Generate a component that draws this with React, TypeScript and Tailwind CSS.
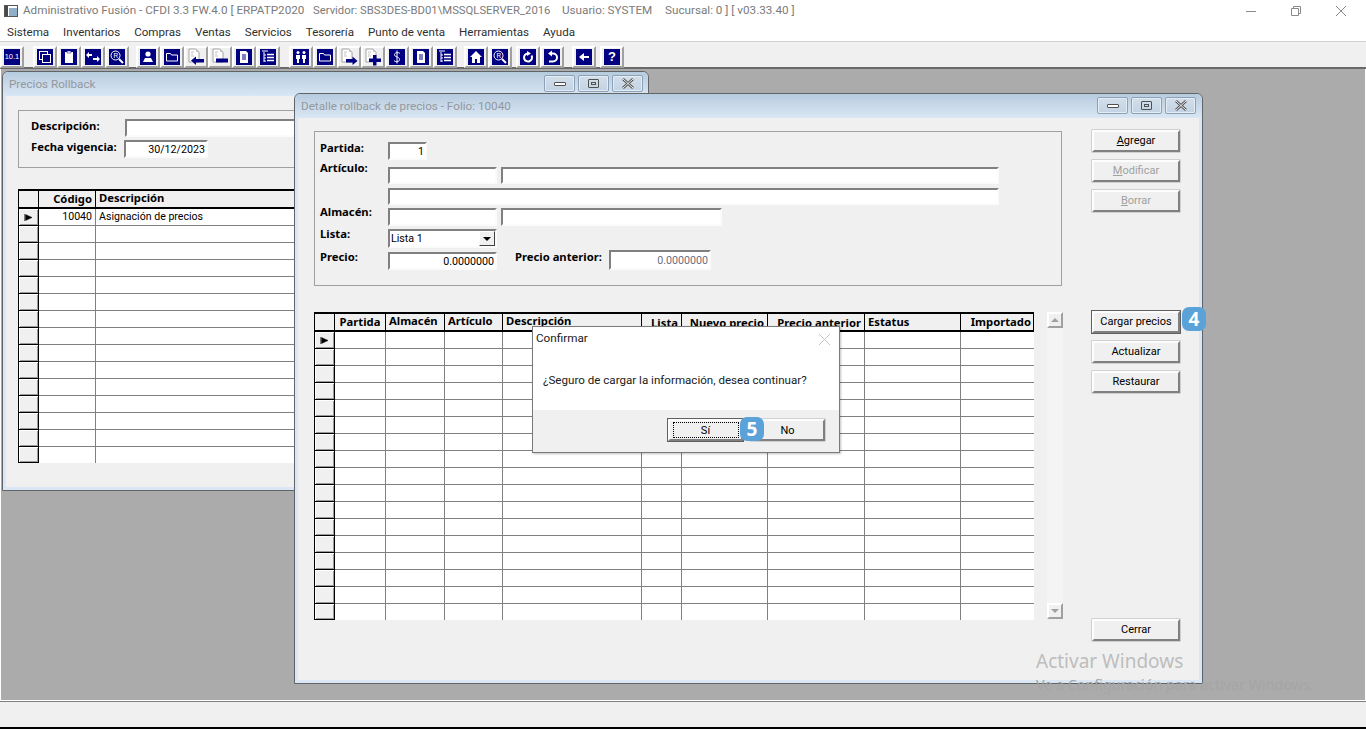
import React from "react";

const ui = "font-['Roboto',sans-serif]";
const boldFace = "font-['Noto_Sans',sans-serif] font-bold";

const Page = ({ children }: { children: React.ReactNode }) => (
  <svg width="18" height="18" viewBox="0 0 18 18">
    <path d="M2 1h7l3 3v10H2z" fill="#fff" stroke="#8f8f8f" strokeWidth="0.8" />
    <path d="M9 1v3h3z" fill="#c8c8c8" />
    <path d="M4 4h3M4 6h2M4 8h3" stroke="#b5b5b5" strokeWidth="0.8" />
    {children}
  </svg>
);

const Navy = ({ children }: { children: React.ReactNode }) => (
  <svg width="16" height="16" viewBox="0 0 16 16" className="bg-[#000080]">
    {children}
  </svg>
);

const Search = () => (
  <Navy>
    <circle cx="6.5" cy="6.5" r="4.5" fill="none" stroke="#fff" strokeWidth="1" />
    <text x="4.6" y="9" fontSize="6.5" fill="#fff" fontFamily="Liberation Sans">R</text>
    <path d="M10 10l4 4" stroke="#fff" strokeWidth="2" />
  </Navy>
);
const Doc = () => (
  <Navy>
    <path d="M4 2h6l2 2v10H4z" fill="#fff" />
    <path d="M6 6h4M6 8h4M6 10h4" stroke="#000080" strokeWidth="1" />
  </Navy>
);
const Tree = () => (
  <Navy>
    <path d="M2 2h6M4 3v10M4 6h2M4 9h2M4 12h2" stroke="#fff" strokeWidth="1" fill="none" />
    <path d="M7 5.5h7M7 8.5h7M7 11.5h7" stroke="#fff" strokeWidth="1.6" />
  </Navy>
);
const Folder = () => (
  <Navy>
    <path d="M2.5 5V4.5h4l1 1.5h6v6h-11z" fill="none" stroke="#fff" strokeWidth="1" />
  </Navy>
);

const icons: React.ReactNode[] = [
  <span className="flex h-4 w-4 items-center justify-center bg-[#000080] font-['Liberation_Sans',sans-serif] text-[7.5px] leading-none text-white">10.1</span>,
  <Navy><rect x="2.5" y="2.5" width="8" height="8" fill="none" stroke="#fff" /><rect x="5.5" y="5.5" width="8" height="8" fill="#000080" stroke="#fff" /></Navy>,
  <Navy><path d="M4 3h8v11H4z" fill="#fff" /><path d="M6 2h4v2H6z" fill="#fff" stroke="#000080" strokeWidth="0.5" /></Navy>,
  <Navy><path d="M1 6l3-3v2h3v2H4v2zM15 10l-3-3v2H8v2h4v2z" fill="#fff" /></Navy>,
  <Search />,
  <Navy><circle cx="8" cy="5" r="2.6" fill="#fff" /><path d="M3 13l2-4h6l2 4z" fill="#fff" /></Navy>,
  <Folder />,
  <Page><path d="M4 12.5l5-4v2.5h8v3.5H9v2.5z" fill="#000080" /></Page>,
  <Page><path d="M5 10.5h12v4H5z" fill="#000080" /></Page>,
  <Doc />,
  <Tree />,
  <Navy><circle cx="5" cy="3.5" r="1.5" fill="#fff" /><circle cx="11" cy="3.5" r="1.5" fill="#fff" /><path d="M3 6h4v4H6v4H4v-4H3zM9 6h4v4h-1v4h-2v-4H9z" fill="#fff" /></Navy>,
  <Folder />,
  <Page><path d="M17.5 13l-5-4.5V11H6v3.5h6.500V17z" fill="#000080" /></Page>,
  <Page><path d="M9 7h3.500v3.500H17V14h-4.500v3.500H9V14H5v-3.500h4z" fill="#000080" /></Page>,
  <Navy><path d="M11 4.500C10 3.500 6 3 5.500 5.500S10.500 7.500 10.500 10.500 6 13 5 11.500M8 1.500v13" fill="none" stroke="#fff" strokeWidth="1" /></Navy>,
  <Doc />,
  <Tree />,
  <Navy><path d="M8 2l6 6h-2v6H9v-4H7v4H4V8H2z" fill="#fff" /></Navy>,
  <Search />,
  <Navy><path d="M8 4.500a4 4 0 1 0 3.500 2" fill="none" stroke="#fff" strokeWidth="2" /><path d="M7 2l4 2.500L7 7z" fill="#fff" /></Navy>,
  <Navy><path d="M7 4.500h2a3.500 3.500 0 0 1 0 8H5" fill="none" stroke="#fff" strokeWidth="2" /><path d="M8 1.500L4 4.500l4 3z" fill="#fff" /></Navy>,
  <Navy><path d="M3 8l5-4v3h5v2H8v3z" fill="#fff" /></Navy>,
  <span className="flex h-4 w-4 items-center justify-center bg-[#000080] font-['Liberation_Sans',sans-serif] text-[13px] font-bold text-white">?</span>,
];

// how many buttons per group, and the space before that group
const groups = [
  { n: 1, gap: "ml-0" },
  { n: 4, gap: "ml-[9px]" },
  { n: 6, gap: "ml-[7px]" },
  { n: 7, gap: "ml-[9px]" },
  { n: 2, gap: "ml-[7px]" },
  { n: 2, gap: "ml-[4px]" },
  { n: 1, gap: "ml-[8px]" },
  { n: 1, gap: "ml-[4px]" },
];

const Toolbar = () => {
  let at = 0;
  return (
    <div className="flex h-[26px] items-center border-b-2 border-[#696969] bg-[#f0f0f0] pt-[3px]">
      {groups.map((g, i) => {
        const slice = icons.slice(at, at + g.n);
        at += g.n;
        return (
          <div key={i} className={`flex ${g.gap}`}>
            {slice.map((icon, j) => (
              <div
                key={j}
                className="flex h-[22px] w-6 items-center justify-center border-2 border-t-white border-l-white border-r-[#a0a0a0] border-b-[#a0a0a0]"
              >
                {icon}
              </div>
            ))}
          </div>
        );
      })}
    </div>
  );
};

const menus = ["Sistema", "Inventarios", "Compras", "Ventas", "Servicios", "Tesorería", "Punto de venta", "Herramientas", "Ayuda"];

const Field = ({ className, value, muted }: { className: string; value?: string; muted?: boolean }) => (
  <div
    className={`flex items-center justify-end border-2 border-t-[#808080] border-l-[#808080] border-r-[#fbfbfb] border-b-[#fbfbfb] bg-white pr-[1px] pt-[2px] text-[10.7px] leading-none ${muted ? "text-[#6d6d80]" : "text-black"} ${className}`}
  >
    {value}
  </div>
);

const Btn = ({
  children,
  className = "",
  disabled,
  focused,
}: {
  children: React.ReactNode;
  className?: string;
  disabled?: boolean;
  focused?: boolean;
}) => (
  <div
    className={`flex h-[22px] items-center justify-center border-2 border-t-[#fdfdfd] border-l-[#fdfdfd] border-r-[#808080] border-b-[#808080] bg-[#f0f0f0] pb-[1px] text-[11px] leading-none shadow-[0_0_0_0.5px_#b0b0b0] ${disabled ? "text-[#a0a0a0]" : "text-black"} ${focused ? "outline outline-1 outline-[#606060]" : ""} ${className}`}
  >
    {children}
  </div>
);

const RowMark = () => (
  <svg width="9" height="7" viewBox="0 0 9 7">
    <path d="M.5 0v7M1.500 .5l6.500 3-6.500 3z" fill="#000" stroke="#000" strokeWidth="0.5" />
  </svg>
);

type Col = { label: string; cls: string };

const DataGrid = ({
  template,
  columns,
  rows,
  first,
}: {
  template: string;
  columns: Col[];
  rows: number;
  first?: string[];
}) => (
  <div className="flex flex-col">
    <div className={`grid h-[20px] border-t-2 border-black bg-[#f0f0f0] ${template}`}>
      <div className="border-x border-b-2 border-black" />
      {columns.map((c) => (
        <div key={c.label} className={`flex items-center whitespace-nowrap border-r border-b-2 border-black text-[11.25px] leading-none text-black ${boldFace} ${c.cls}`}>
          {c.label}
        </div>
      ))}
    </div>
    {Array.from({ length: rows }).map((_, r) => {
      const last = r === rows - 1;
      return (
        <div key={r} className={`grid bg-white ${last ? "h-[16px]" : "h-[17px]"} ${template}`}>
          <div className="flex items-center justify-center border-x border-b border-x-black border-b-black bg-[#f0f0f0] shadow-[inset_1px_1px_0_#fff,inset_-1px_-1px_0_#9a9a9a]">
            {r === 0 && <RowMark />}
          </div>
          {columns.map((c, i) => (
            <div
              key={c.label}
              className={`flex items-center border-[#808080] px-[3px] text-[10.6px] leading-none text-black ${last ? "" : "border-b"} ${i === columns.length - 1 ? "" : "border-r"} ${i === 0 ? "justify-end" : ""}`}
            >
              {r === 0 && first ? first[i] : ""}
            </div>
          ))}
        </div>
      );
    })}
  </div>
);

const WinButtons = ({ className }: { className: string }) => (
  <div className={`flex gap-[3px] ${className}`}>
    {["min", "max", "close"].map((k) => (
      <div
        key={k}
        className="flex h-[17px] w-[31px] items-center justify-center rounded-[2px] border border-[#8ba1b8] bg-gradient-to-b from-[#d3deea] to-[#c3d3e3] shadow-[inset_0_0_0_1px_#e4ecf4]"
      >
        {k === "min" && <div className="h-[4px] w-[12px] rounded-[1px] border border-[#505050] bg-white" />}
        {k === "max" && <div className="flex h-[9px] w-[11px] items-center justify-center rounded-[1px] border border-[#505050]"><div className="h-[3px] w-[5px] border border-[#505050]" /></div>}
        {k === "close" && (
          <svg width="14" height="11" viewBox="0 0 14 11">
            <path d="M2 1l10 9M12 1L2 10" stroke="#505050" strokeWidth="2.6" />
            <path d="M2 1l10 9M12 1L2 10" stroke="#f4f4f4" strokeWidth="1" />
          </svg>
        )}
      </div>
    ))}
  </div>
);

const MdiWindow = ({
  title,
  className,
  buttons,
  children,
}: {
  title: string;
  className: string;
  buttons: string;
  children: React.ReactNode;
}) => (
  <div className={`absolute flex flex-col rounded-t-[6px] border border-[#5f6468] bg-[#dbe7f4] ${className}`}>
    <div className="relative flex h-[24px] shrink-0 items-center rounded-t-[6px] bg-gradient-to-b from-[#b7cbdf] to-[#dae7f4] pl-[6px] pt-[2px] text-[11.7px] text-[#93989d]">
      {title}
      <WinButtons className={buttons} />
    </div>
    <div className="mx-[3px] mb-[3px] flex-1 overflow-hidden bg-[#f0f0f0]">{children}</div>
  </div>
);

const Label = ({ children, className = "" }: { children: React.ReactNode; className?: string }) => (
  <div className={`text-[11.25px] leading-[14px] text-black ${boldFace} ${className}`}>{children}</div>
);

const FormRow = ({ className, children }: { className: string; children: React.ReactNode }) => (
  <div className={`flex ${className}`}>{children}</div>
);

const Badge = ({ n, className }: { n: string; className: string }) => (
  <div className={`absolute z-30 flex h-[24px] w-[24px] items-center justify-center rounded-[7px] bg-[#5aa2d8] font-['Noto_Sans',sans-serif] text-[19px] font-bold leading-none text-white ${className}`}>
    {n}
  </div>
);

export default function App() {
  return (
    <div className={`relative flex h-[729px] w-[1366px] flex-col overflow-hidden bg-white ${ui}`}>
      {/* Title bar */}
      <div className="flex h-[22px] shrink-0 items-center text-[11.7px] text-[#7b7b7b]">
        <svg width="14" height="14" viewBox="0 0 14 14" className="ml-[4px] mr-[5px]">
          <rect x="0.5" y="1.5" width="13" height="11" fill="#fff" stroke="#555" />
          <rect x="1" y="2" width="3" height="10" fill="#4a4a4a" />
          <rect x="5" y="4" width="8" height="8" fill="#8fb0c9" />
        </svg>
        <span className="w-[290px] whitespace-nowrap">Administrativo Fusión - CFDI 3.3 FW.4.0 [ ERPATP2020</span>
        <span className="w-[249px] whitespace-nowrap text-[11.3px]">Servidor: SBS3DES-BD01\MSSQLSERVER_2016</span>
        <span className="w-[103px] whitespace-nowrap">Usuario: SYSTEM</span>
        <span className="whitespace-nowrap">Sucursal: 0 ] [ v03.33.40 ]</span>
        <div className="ml-auto flex items-center gap-[35px] pr-[20px]">
          <svg width="10" height="10" viewBox="0 0 10 10"><path d="M0 5.500h10" stroke="#8a8a8a" /></svg>
          <svg width="10" height="10" viewBox="0 0 10 10"><path d="M.5 2.500h7v7h-7zM2.500 2.500v-2h7v7h-2" fill="none" stroke="#8a8a8a" /></svg>
          <svg width="10" height="10" viewBox="0 0 10 10"><path d="M0 0l10 10M10 0L0 10" stroke="#8a8a8a" /></svg>
        </div>
      </div>

      {/* Menu */}
      <div className="flex h-[20px] shrink-0 items-center gap-[14px] border-b border-[#d0d0d0] pl-[7px] pt-[2px] text-[11.6px] text-[#303030]">
        {menus.map((m) => (
          <span key={m}>{m}</span>
        ))}
      </div>
      <div className="h-[1px] shrink-0 bg-[#f0f0f0]" />

      <Toolbar />

      {/* MDI area */}
      <div className="relative mx-[1px] flex-1 bg-[#ababab]">
        <MdiWindow title="Precios Rollback" className="left-[1px] top-[2px] z-0 h-[420px] w-[647px]" buttons="absolute right-[5px] top-[3px]">
          <div className="pl-[12px] pt-[14px]">
            <div className="h-[58px] w-[620px] border border-[#a0a0a0] pl-[12px] pt-[8px]">
              <FormRow className="h-[21px]">
                <Label className="w-[94px]">Descripción:</Label>
                <Field className="h-[18px] w-[400px]" />
              </FormRow>
              <FormRow>
                <Label className="w-[93px]">Fecha vigencia:</Label>
                <Field value="30/12/2023" className="h-[18px] w-[84px]" />
              </FormRow>
            </div>
            <div className="mt-[21px] w-[600px]">
              <DataGrid
                template="grid-cols-[21px_57px_1fr]"
                columns={[
                  { label: "Código", cls: "justify-end pr-[3px]" },
                  { label: "Descripción", cls: "pl-[3px] pb-[3px]" },
                ]}
                rows={15}
                first={["10040", "Asignación de precios"]}
              />
            </div>
          </div>
        </MdiWindow>

        <MdiWindow title="Detalle rollback de precios - Folio: 10040" className="left-[293px] top-[24px] z-10 h-[591px] w-[909px]" buttons="absolute right-[6px] top-[3px]">
          <div className="pl-[16px] pt-[13px]">
            <div className="flex">
              <div className="h-[155px] w-[748px] border border-[#a0a0a0] pl-[5px] pt-[10px]">
                <FormRow className="h-[18px]">
                  <Label className="-mt-[1px] w-[68px]">Partida:</Label>
                  <Field value="1" className="w-[39px]" />
                </FormRow>
                <FormRow className="mt-[7px] h-[17px]">
                  <Label className="-mt-[6px] w-[68px]">Artículo:</Label>
                  <Field className="w-[109px]" />
                  <Field className="ml-[4px] w-[498px]" />
                </FormRow>
                <FormRow className="ml-[68px] mt-[4px] h-[17px]">
                  <Field className="w-[611px]" />
                </FormRow>
                <FormRow className="mt-[3px] h-[18px]">
                  <Label className="-mt-[3px] w-[68px]">Almacén:</Label>
                  <Field className="w-[109px]" />
                  <Field className="ml-[4px] w-[221px]" />
                </FormRow>
                <FormRow className="mt-[3px] h-[19px]">
                  <Label className="-mt-[2px] w-[68px]">Lista:</Label>
                  <div className="flex w-[109px] items-center border-2 border-t-[#808080] border-l-[#808080] border-r-[#fbfbfb] border-b-[#fbfbfb] bg-white pl-[1px] text-[10.7px] leading-none text-black">
                    <span className="pt-[2px]">Lista 1</span>
                    <div className="ml-auto flex h-[15px] w-[16px] items-center justify-center border border-t-white border-l-white border-r-[#404040] border-b-[#404040] bg-[#f0f0f0]">
                      <svg width="8" height="4" viewBox="0 0 8 4"><path d="M0 0h8L4 4z" fill="#000" /></svg>
                    </div>
                  </div>
                </FormRow>
                <FormRow className="mt-[4px] h-[18px]">
                  <Label className="-mt-[2px] w-[68px]">Precio:</Label>
                  <Field value="0.0000000" className="w-[109px]" />
                  <Label className="-mt-[2px] ml-[18px] w-[94px]">Precio anterior:</Label>
                  <Field value="0.0000000" muted className="-mt-[2px] w-[102px]" />
                </FormRow>
              </div>
              <div className="-mt-[1px] ml-[30px] flex w-[88px] flex-col gap-[8px]">
                <Btn><span><u>A</u>gregar</span></Btn>
                <Btn disabled><span><u>M</u>odificar</span></Btn>
                <Btn disabled><span><u>B</u>orrar</span></Btn>
              </div>
            </div>

            <div className="mt-[26px] flex">
              <div className="w-[720px]">
                <DataGrid
                  template="grid-cols-[21px_51px_59px_58px_139px_40px_86px_97px_96px_73px]"
                  columns={[
                    { label: "Partida", cls: "justify-center" },
                    { label: "Almacén", cls: "pl-[3px] pb-[3px]" },
                    { label: "Artículo", cls: "pl-[3px] pb-[3px]" },
                    { label: "Descripción", cls: "pl-[3px] pb-[3px]" },
                    { label: "Lista", cls: "justify-end pr-[3px] pt-[1px]" },
                    { label: "Nuevo precio", cls: "justify-end pr-[3px] pt-[1px]" },
                    { label: "Precio anterior", cls: "justify-end pr-[3px] pt-[1px]" },
                    { label: "Estatus", cls: "pl-[3px]" },
                    { label: "Importado", cls: "justify-end pr-[2px]" },
                  ]}
                  rows={17}
                />
              </div>
              <div className="ml-[13px] flex h-[307px] w-[16px] flex-col justify-between bg-[#f4f4f4] bg-[radial-gradient(#d8d8d8_0.5px,transparent_0.5px)] bg-[length:2px_2px]">
                <div className="flex h-[16px] items-center justify-center border-2 border-t-white border-l-white border-r-[#a0a0a0] border-b-[#a0a0a0] bg-[#f0f0f0]">
                  <svg width="8" height="4" viewBox="0 0 8 4"><path d="M0 4h8L4 0z" fill="#a0a0a0" /></svg>
                </div>
                <div className="flex h-[16px] items-center justify-center border-2 border-t-white border-l-white border-r-[#a0a0a0] border-b-[#a0a0a0] bg-[#f0f0f0]">
                  <svg width="8" height="4" viewBox="0 0 8 4"><path d="M0 0h8L4 4z" fill="#a0a0a0" /></svg>
                </div>
              </div>
              <div className="-mt-[1px] ml-[29px] flex w-[88px] flex-col">
                <Btn focused>Cargar precios</Btn>
                <Btn className="mt-[8px]">Actualizar</Btn>
                <Btn className="mt-[8px]">Restaurar</Btn>
                <Btn className="mt-[226px]">Cerrar</Btn>
              </div>
            </div>
          </div>
        </MdiWindow>

        {/* Confirm dialog */}
        <div className="absolute left-[531px] top-[257px] z-20 flex h-[127px] w-[308px] flex-col border border-[#7a7a7a] bg-white shadow-[1px_1px_2px_rgba(0,0,0,0.25)]">
          <div className="flex h-[22px] items-center justify-between pl-[3px] pr-[9px] pt-[2px] text-[11.7px] text-[#202020]">
            Confirmar
            <svg width="11" height="11" viewBox="0 0 11 11"><path d="M0 0l11 11M11 0L0 11" stroke="#c4c4c4" /></svg>
          </div>
          <div className="flex h-[61px] items-center pl-[10px] pt-[2px] text-[11.6px] text-[#202020]">
            ¿Seguro de cargar la información, desea continuar?
          </div>
          <div className="flex flex-1 justify-end gap-[7px] bg-[#f0f0f0] pr-[14px] pt-[9px]">
            <Btn focused className="w-[75px] !pb-0">
              <span className="flex h-[16px] w-[66px] items-center justify-center border border-dotted border-black">Sí</span>
            </Btn>
            <Btn className="w-[75px] !pb-0">No</Btn>
          </div>
        </div>

        <Badge n="4" className="left-[1181px] top-[238px]" />
        <Badge n="5" className="left-[739px] top-[348px]" />

        {/* Windows activation watermark */}
        <div className="pointer-events-none absolute left-[1035px] top-[579px] z-40 whitespace-nowrap font-['Noto_Sans',sans-serif] text-[19px] leading-[27px] text-[#bdbdbd]">
          <div>Activar Windows</div>
          <div className="mt-[1px] text-[14.3px] leading-[18px] text-[#a5a5a5]">Ve a Configuración para activar Windows.</div>
        </div>
      </div>

      {/* Status bar */}
      <div className="h-[29px] shrink-0 border-b-2 border-black bg-[#f0f0f0] shadow-[inset_0_1px_0_#fff,inset_0_2px_0_#808080]" />
    </div>
  );
}
